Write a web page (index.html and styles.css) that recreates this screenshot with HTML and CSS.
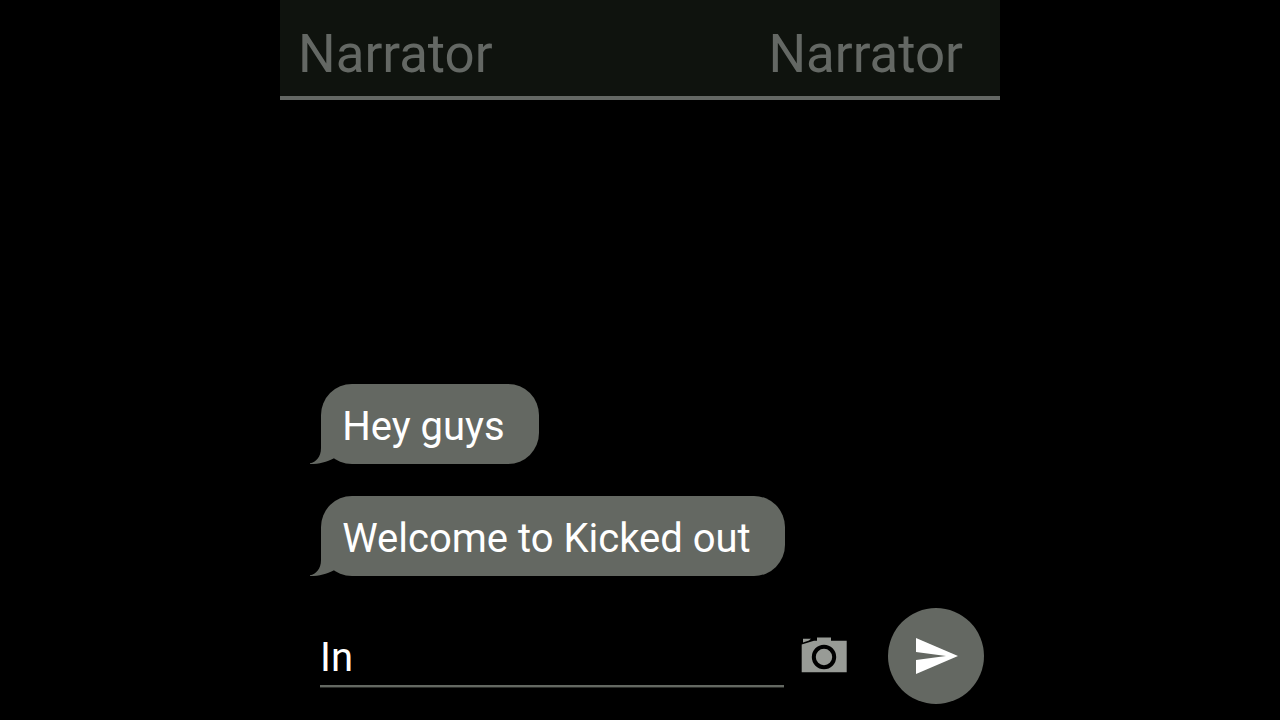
FILE: index.html
```html
<!DOCTYPE html>
<html lang="en">

<head>
    <meta charset="UTF-8">
    <meta name="viewport" content="width=device-width, initial-scale=1.0">
    <title>Chat</title>
    <link rel="stylesheet" href="styles.css">
</head>

<body>
    <div class="chat">
        <header class="header">
            <span class="name">Narrator</span>
            <span class="name">Narrator</span>
        </header>
        <main class="messages">
            <div class="bubble">
                Hey guys
                <svg class="tail" width="26" height="36" viewBox="0 0 26 36">
                    <path d="M11 0V20C11 29 6 34 0 35.3V36C10 36 16 34 24.5 30V0Z" />
                </svg>
            </div>
            <div class="bubble">
                Welcome to Kicked out
                <svg class="tail" width="26" height="36" viewBox="0 0 26 36">
                    <path d="M11 0V20C11 29 6 34 0 35.3V36C10 36 16 34 24.5 30V0Z" />
                </svg>
            </div>
        </main>
        <footer class="composer">
            <div class="field">In</div>
            <svg class="camera" width="46" height="36" viewBox="0 0 46 36">
                <path class="camera-body" d="M0.7 7.5L13 3.8H16V0.6H30V3.8H45.7V35.3H0.7Z" />
                <path class="camera-body" d="M2 1.8H10L8 3.4L2 5.4Z" />
                <circle class="camera-lens" cx="23" cy="20" r="10.2" />
            </svg>
            <div class="send">
                <svg width="42" height="36" viewBox="0 0 42 36">
                    <path d="M0 0L42 18L0 36V22L30 18L0 14Z" />
                </svg>
            </div>
        </footer>
    </div>
</body>

</html>
```
FILE: styles.css
```css
* {
    box-sizing: border-box;
}

body {
    margin: 0;
    background-color: #000;
    font-family: Roboto, sans-serif;
}

.chat {
    display: flex;
    flex-direction: column;
    width: 720px;
    height: 720px;
    margin: 0 auto;
    background-color: #000;
}

.header {
    display: flex;
    justify-content: space-between;
    height: 100px;
    padding: 22px 37px 0 18px;
    background-color: #0f130e;
    border-bottom: 4px solid #646864;
}

.name {
    font-size: 52.8px;
    line-height: 64px;
    color: #646864;
}

.messages {
    flex: 1;
    display: flex;
    flex-direction: column;
    justify-content: flex-end;
    align-items: flex-start;
    gap: 32px;
    padding: 0 0 16px 41px;
}

.bubble {
    position: relative;
    height: 80px;
    padding: 3px 34.3px 0 21.2px;
    border-radius: 31px;
    background-color: #646862;
    font-size: 40px;
    line-height: 80px;
    color: #fff;
    white-space: nowrap;
}

/* the tail hangs out to the left of the bottom corner */
.tail {
    position: absolute;
    left: -11px;
    bottom: 0;
    fill: #646862;
}

.composer {
    display: flex;
    height: 128px;
    padding: 16px 16px 16px 40px;
}

.field {
    width: 464px;
    height: 79px;
    padding-top: 10px;
    border-bottom: 2px solid #646862;
    box-shadow: 0 1px #2a2c29;
    font-size: 40px;
    line-height: 80px;
    color: #fff;
}

.camera {
    margin: 29px 0 0 17px;
}

.camera-body {
    fill: #989b96;
}

.camera-lens {
    fill: none;
    stroke: #000;
    stroke-width: 4;
}

.send {
    display: flex;
    align-items: center;
    justify-content: center;
    width: 96px;
    height: 96px;
    margin-left: auto;
    padding-left: 2px;
    border-radius: 50%;
    background-color: #646862;
    fill: #fff;
}
```
